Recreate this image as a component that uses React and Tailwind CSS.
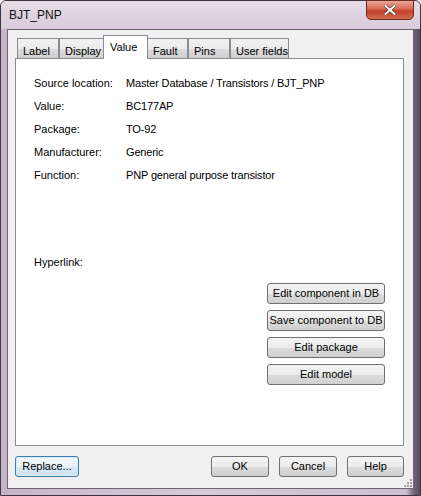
import React from "react";

const rows = [
  ["Source location:", "Master Database / Transistors / BJT_PNP"],
  ["Value:", "BC177AP"],
  ["Package:", "TO-92"],
  ["Manufacturer:", "Generic"],
  ["Function:", "PNP general purpose transistor"],
];

const tabs = [
  { label: "Label", w: "w-[42px]" },
  { label: "Display", w: "w-[45px]" },
  { label: "Value", w: "w-[45px]", active: true },
  { label: "Fault", w: "w-[41px]" },
  { label: "Pins", w: "w-[42px]" },
  { label: "User fields", w: "w-[59px]" },
];

function Btn({ children, className = "" }) {
  return (
    <button
      className={
        "h-[21px] rounded-[3px] border border-[#707070] bg-[linear-gradient(to_bottom,#f4f4f4_0%,#ebebeb_50%,#dddddd_51%,#cfcfcf_100%)] text-[11px] text-black leading-none " +
        className
      }
    >
      {children}
    </button>
  );
}

export default function App() {
  return (
    <div
      className="w-[421px] h-[496px] flex flex-col rounded-t-[6px] border border-[#3d3544] bg-[linear-gradient(to_right,#c6b5c8_0px,#d8cad9_200px,#cdbfcf_405px,#6f6375_413px,#554a5b_420px)] text-black"
      style={{ fontFamily: '"Liberation Sans", Arial, sans-serif' }}
    >
      {/* Title bar */}
      <div className="h-[28px] relative flex items-center pl-[8px] rounded-t-[5px] bg-[linear-gradient(to_bottom,#e6dbe7,#d9cbdb)]">
        <span className="text-[12px] text-[#111]">BJT_PNP</span>
        <div className="absolute right-[6px] top-[-1px] w-[48px] h-[20px] rounded-b-[5px] border border-[#6b2a24] bg-[linear-gradient(to_bottom,#e8a79a_0%,#d9674f_45%,#c2402a_55%,#d46a4f_100%)] flex items-center justify-center">
          <svg width="12" height="10" viewBox="0 0 12 10">
            <path d="M1.5 1 L10.5 9 M10.5 1 L1.5 9" stroke="#4a2b2b" strokeWidth="3.2" strokeLinecap="square" />
            <path d="M1.5 1 L10.5 9 M10.5 1 L1.5 9" stroke="#ffffff" strokeWidth="2" strokeLinecap="square" />
          </svg>
        </div>
      </div>

      {/* Client area */}
      <div className="flex-1 mx-[6px] mb-[6px] border border-[#6d6272] bg-[#f0f0f0] flex flex-col pl-[7px] pr-[9px] relative">
        {/* Tabs */}
        <div className="h-[28px] flex items-end pl-[2px] relative z-10">
          {tabs.map((t) =>
            t.active ? (
              <div
                key={t.label}
                className={
                  t.w +
                  " h-[24px] -mx-[1px] -mb-[1px] border border-b-0 border-[#898c95] bg-white text-[11px] pl-[6px] pt-[3px]"
                }
              >
                {t.label}
              </div>
            ) : (
              <div
                key={t.label}
                className={
                  t.w +
                  " h-[20px] border border-b-0 border-[#898c95] bg-[linear-gradient(to_bottom,#f2f2f2_0%,#ebebeb_50%,#dddddd_51%,#cfcfcf_100%)] text-[11px] pl-[5px] pt-[4px]"
                }
              >
                {t.label}
              </div>
            )
          )}
        </div>

        {/* Panel */}
        <div className="h-[388px] border border-[#898c95] bg-white flex flex-col pt-[13px] pl-[18px] pr-[18px] text-[11px]">
          {rows.map(([k, v]) => (
            <div key={k} className="h-[23px] flex items-center">
              <span className="w-[92px]">{k}</span>
              <span className="tracking-[-0.15px]">{v}</span>
            </div>
          ))}
          <div className="h-[23px] flex items-center mt-[64px]">Hyperlink:</div>
          <div className="mt-[9px] flex flex-col items-end gap-[6px]">
            <Btn className="w-[118px]">Edit component in DB</Btn>
            <Btn className="w-[118px]">Save component to DB</Btn>
            <Btn className="w-[118px]">Edit package</Btn>
            <Btn className="w-[118px]">Edit model</Btn>
          </div>
        </div>

        {/* Bottom buttons */}
        <div className="mt-[10px] flex items-center">
          <button className="w-[64px] h-[21px] rounded-[3px] border border-[#3c7fb1] bg-[linear-gradient(to_bottom,#f2f8fc_0%,#e8f2f9_50%,#d8e9f5_51%,#cfe3f1_100%)] text-[11px] text-black leading-none shadow-[inset_0_0_0_1px_#d6ecf8]">
            Replace...
          </button>
          <div className="ml-auto flex gap-[10px]">
            <Btn className="w-[58px]">OK</Btn>
            <Btn className="w-[58px]">Cancel</Btn>
            <Btn className="w-[57px]">Help</Btn>
          </div>
        </div>

        {/* Resize grip */}
        <div className="absolute right-[1px] bottom-[1px] grid grid-cols-3 gap-[1px]">
          {[0, 1, 2, 3, 4, 5, 6, 7, 8].map((i) => (
            <div
              key={i}
              className={
                i === 0 || i === 1 || i === 3
                  ? "w-[2px] h-[2px]"
                  : "w-[2px] h-[2px] bg-[#a0a0a0]"
              }
            />
          ))}
        </div>
      </div>
    </div>
  );
}
